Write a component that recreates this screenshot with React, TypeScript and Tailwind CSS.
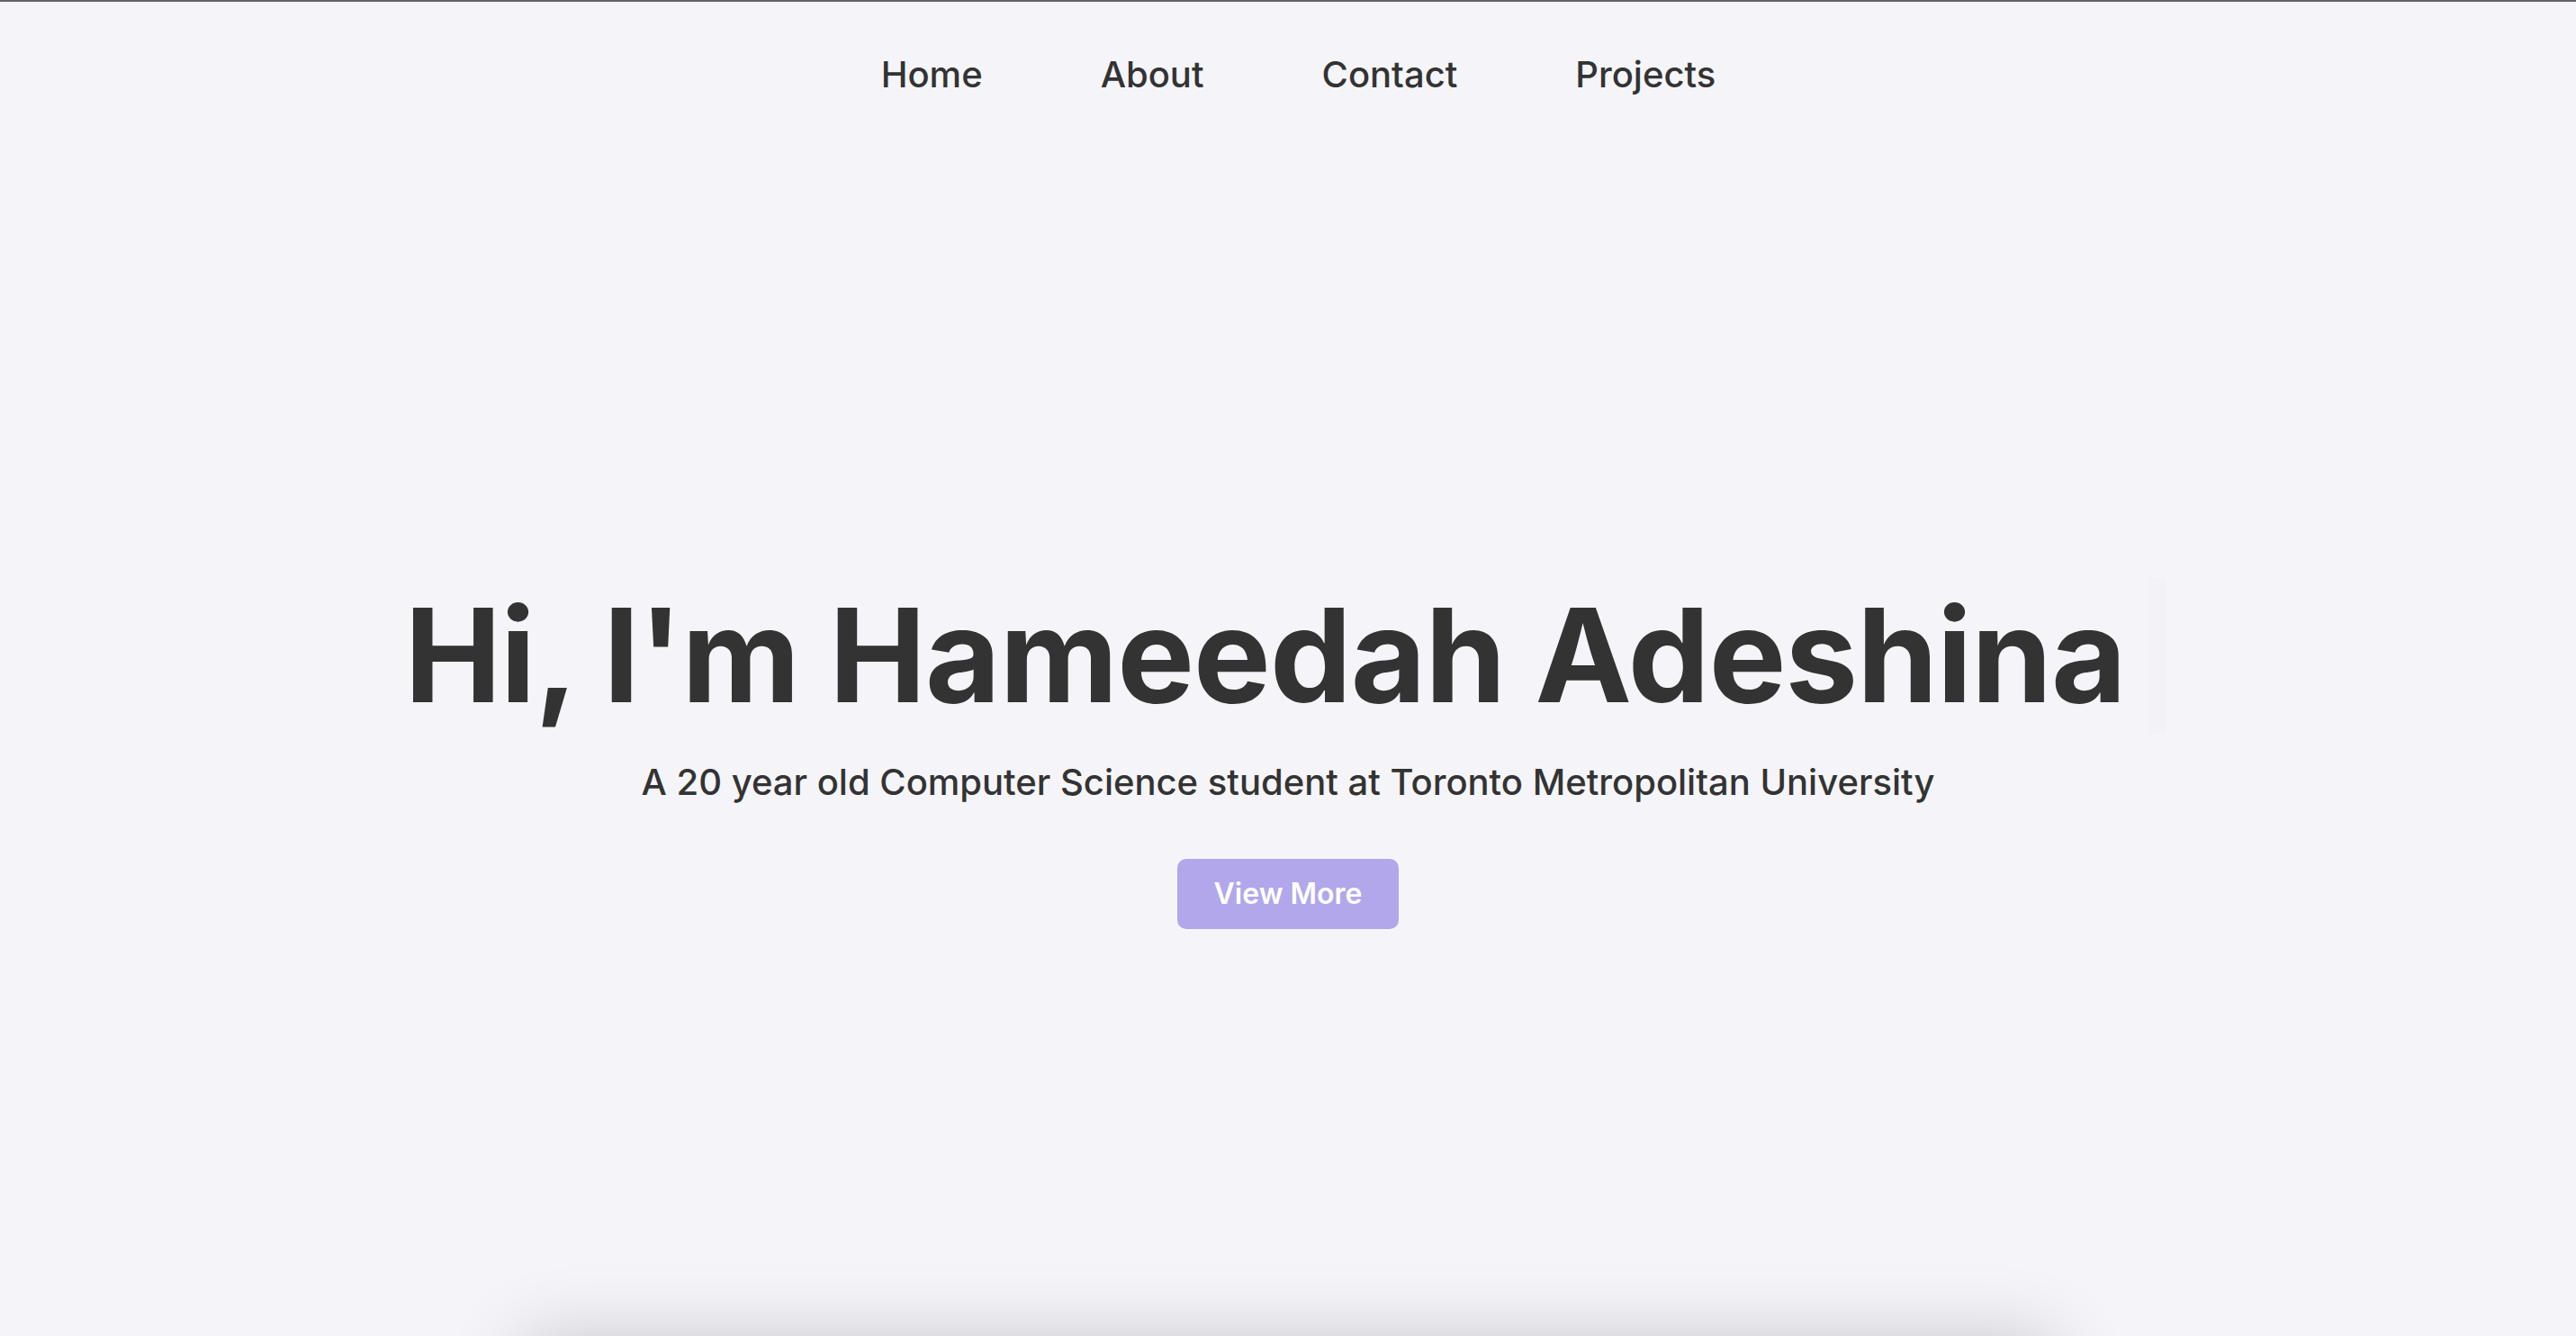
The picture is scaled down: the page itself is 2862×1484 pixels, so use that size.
import React from "react";

export default function App() {
  return (
    <div
      className="min-h-screen bg-[#f5f5f9] text-[#333333] overflow-hidden"
      style={{ fontFamily: "Inter, 'Noto Sans', sans-serif" }}
    >
      <div className="h-[2px] bg-[#646368]" />
      <section className="h-[1482px] flex flex-col">
        <nav className="flex justify-center gap-[131px] pt-[57px] pl-[23px] text-[40px] font-medium leading-[1.2]">
          <a className="cursor-pointer">Home</a>
          <a className="cursor-pointer">About</a>
          <a className="cursor-pointer">Contact</a>
          <a className="cursor-pointer">Projects</a>
        </nav>
        <div className="flex flex-col items-center pt-[535px]">
          <div className="flex justify-center pr-[6px]">
            <h1 className="text-[144px] font-bold leading-[1.2] tracking-[-0.9px] whitespace-nowrap border-r-[21px] border-[#f3f2f7] pr-[24px]">
              Hi, I'm Hameedah Adeshina
            </h1>
          </div>
          <p className="text-[40px] font-medium leading-[1.2] mt-[30px]">
            A 20 year old Computer Science student at Toronto Metropolitan University
          </p>
          <button className="mt-[61px] h-[78px] px-[41px] rounded-[10px] bg-[#b1a7ea] text-white text-[32px] font-semibold">
            View More
          </button>
        </div>
      </section>
      <div className="mx-auto w-[1700px] h-[600px] mt-[6px] bg-[#f5f5f9] shadow-[0_0_80px_rgba(0,0,0,0.2)]" />
    </div>
  );
}
